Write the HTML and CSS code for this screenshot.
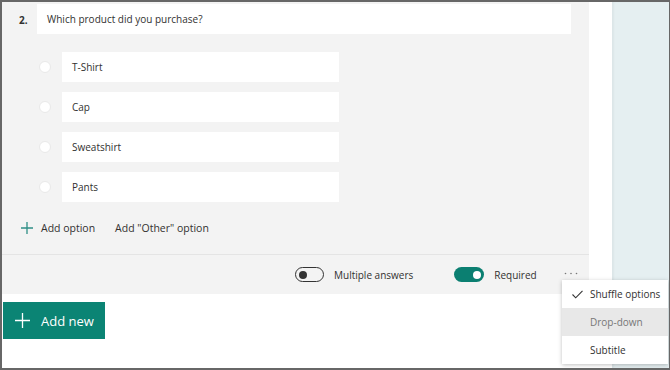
FILE: index.html
```html
<!DOCTYPE html>
<html lang="en">
<head>
  <meta charset="UTF-8" />
  <title>Question</title>
  <link rel="stylesheet" href="styles.css">
</head>
<body>
  <div class="frame">
    <div class="main">
      <div class="card">
        <div class="question">
          <span class="q-num">2.</span>
          <div class="q-input">Which product did you purchase?</div>
        </div>

        <div class="options">
          <div class="option"><span class="radio"></span><div class="opt-input">T-Shirt</div></div>
          <div class="option"><span class="radio"></span><div class="opt-input">Cap</div></div>
          <div class="option"><span class="radio"></span><div class="opt-input">Sweatshirt</div></div>
          <div class="option"><span class="radio"></span><div class="opt-input">Pants</div></div>
        </div>

        <div class="add-row">
          <span class="add-link">
            <svg class="plus" width="12" height="12" viewBox="0 0 12 12"><path d="M6 0v12M0 6h12" stroke="#2f8f86" stroke-width="1.3" fill="none"/></svg>
            Add option
          </span>
          <span class="add-link">Add "Other" option</span>
        </div>

        <div class="card-footer">
          <div class="toggle-item">
            <span class="toggle off"><span class="knob"></span></span>
            Multiple answers
          </div>
          <div class="toggle-item">
            <span class="toggle on"><span class="knob"></span></span>
            Required
          </div>
          <svg class="more" width="14" height="3" viewBox="0 0 14 3"><circle cx="1.5" cy="1.5" r="0.8" fill="#777"/><circle cx="7" cy="1.5" r="0.8" fill="#777"/><circle cx="12.5" cy="1.5" r="0.8" fill="#777"/></svg>
        </div>
      </div>

      <button class="add-new">
        <svg width="15" height="15" viewBox="0 0 15 15"><path d="M7.5 0v15M0 7.5h15" stroke="#fff" stroke-width="1.3" fill="none"/></svg>
        Add new
      </button>
    </div>
    <div class="gutter"></div>
    <div class="side"></div>

    <div class="menu">
      <div class="menu-item">
        <svg class="check" width="11" height="9" viewBox="0 0 11 9"><path d="M0.5 4.5l3.2 3.3L10.5 0.8" stroke="#333" stroke-width="1.1" fill="none"/></svg>
        Shuffle options
      </div>
      <div class="menu-item hover">Drop-down</div>
      <div class="menu-item">Subtitle</div>
    </div>
  </div>
</body>
</html>
```

FILE: styles.css
```css
* { box-sizing: border-box; margin: 0; padding: 0; }
body {
  background: #fff;
  color: #323130;
  font-family: "Open Sans", "Noto Sans", sans-serif;
  font-size: 10px;
  white-space: nowrap;
}
.frame {
  position: relative;
  width: 670px;
  height: 370px;
  border: 2px solid #676767;
  border-right-width: 1px;
  display: flex;
  overflow: hidden;
}
.main {
  width: 587px;
  display: flex;
  flex-direction: column;
}
.card {
  background: #f3f3f3;
  height: 292px;
  padding-top: 2px;
  display: flex;
  flex-direction: column;
}
.question {
  display: flex;
  align-items: flex-start;
  padding-left: 17px;
}
.q-num {
  width: 18px;
  font-weight: bold;
  font-size: 10px;
  padding-top: 9px;
}
.q-input {
  width: 534px;
  height: 30px;
  background: #fff;
  padding: 0 10px;
  display: flex;
  align-items: center;
}
.options {
  display: flex;
  flex-direction: column;
  gap: 10px;
  margin-top: 18px;
}
.option {
  display: flex;
  align-items: center;
}
.radio {
  width: 12px;
  height: 12px;
  border-radius: 50%;
  background: #fff;
  border: 1px solid #e9e9e9;
  margin-left: 37px;
  margin-right: 11px;
}
.opt-input {
  width: 277px;
  height: 30px;
  background: #fff;
  padding: 0 10px;
  display: flex;
  align-items: center;
}
.add-row {
  display: flex;
  align-items: center;
  gap: 20px;
  height: 30px;
  margin-top: 11px;
  padding-left: 19px;
  font-size: 10.5px;
}
.add-link {
  display: flex;
  align-items: center;
  gap: 8px;
}
.card-footer {
  margin-top: 11px;
  border-top: 1px solid #e4e4e4;
  flex: 1;
  display: flex;
  align-items: center;
  padding-left: 293px;
}
.toggle-item {
  display: flex;
  align-items: center;
  gap: 10px;
}
.toggle-item + .toggle-item {
  margin-left: 41px;
}
.toggle {
  width: 29px;
  height: 15px;
  border-radius: 8px;
  display: flex;
  align-items: center;
  padding: 0 3px;
}
.toggle .knob {
  width: 8px;
  height: 8px;
  border-radius: 50%;
}
.toggle.off {
  border: 1.5px solid #333;
}
.toggle.off .knob { background: #333; }
.toggle.on {
  width: 30px;
  background: #0b7f71;
  justify-content: flex-end;
}
.toggle.on .knob { background: #fff; }
.more {
  margin-left: 27px;
  margin-top: -2px;
}
.add-new {
  margin: 8px 0 0 1px;
  width: 102px;
  height: 37px;
  background: #0b8474;
  color: #fff;
  border: none;
  font-family: inherit;
  font-size: 13px;
  display: flex;
  align-items: center;
  gap: 11px;
  padding-left: 12px;
}
.gutter { width: 23px; }
.side {
  flex: 1;
  background: #e5eff1;
  box-shadow: inset 2px 0 2px rgba(0, 0, 0, 0.04);
}
.menu {
  position: absolute;
  left: 560px;
  top: 278px;
  width: 106px;
  background: #fff;
  box-shadow: 0 1px 4px rgba(0, 0, 0, 0.25);
}
.menu-item {
  height: 28px;
  display: flex;
  align-items: center;
  padding-left: 28px;
  position: relative;
}
.menu-item.hover {
  background: #e8e8e8;
  color: #777;
}
.check {
  position: absolute;
  left: 10px;
  top: 10px;
}
```
